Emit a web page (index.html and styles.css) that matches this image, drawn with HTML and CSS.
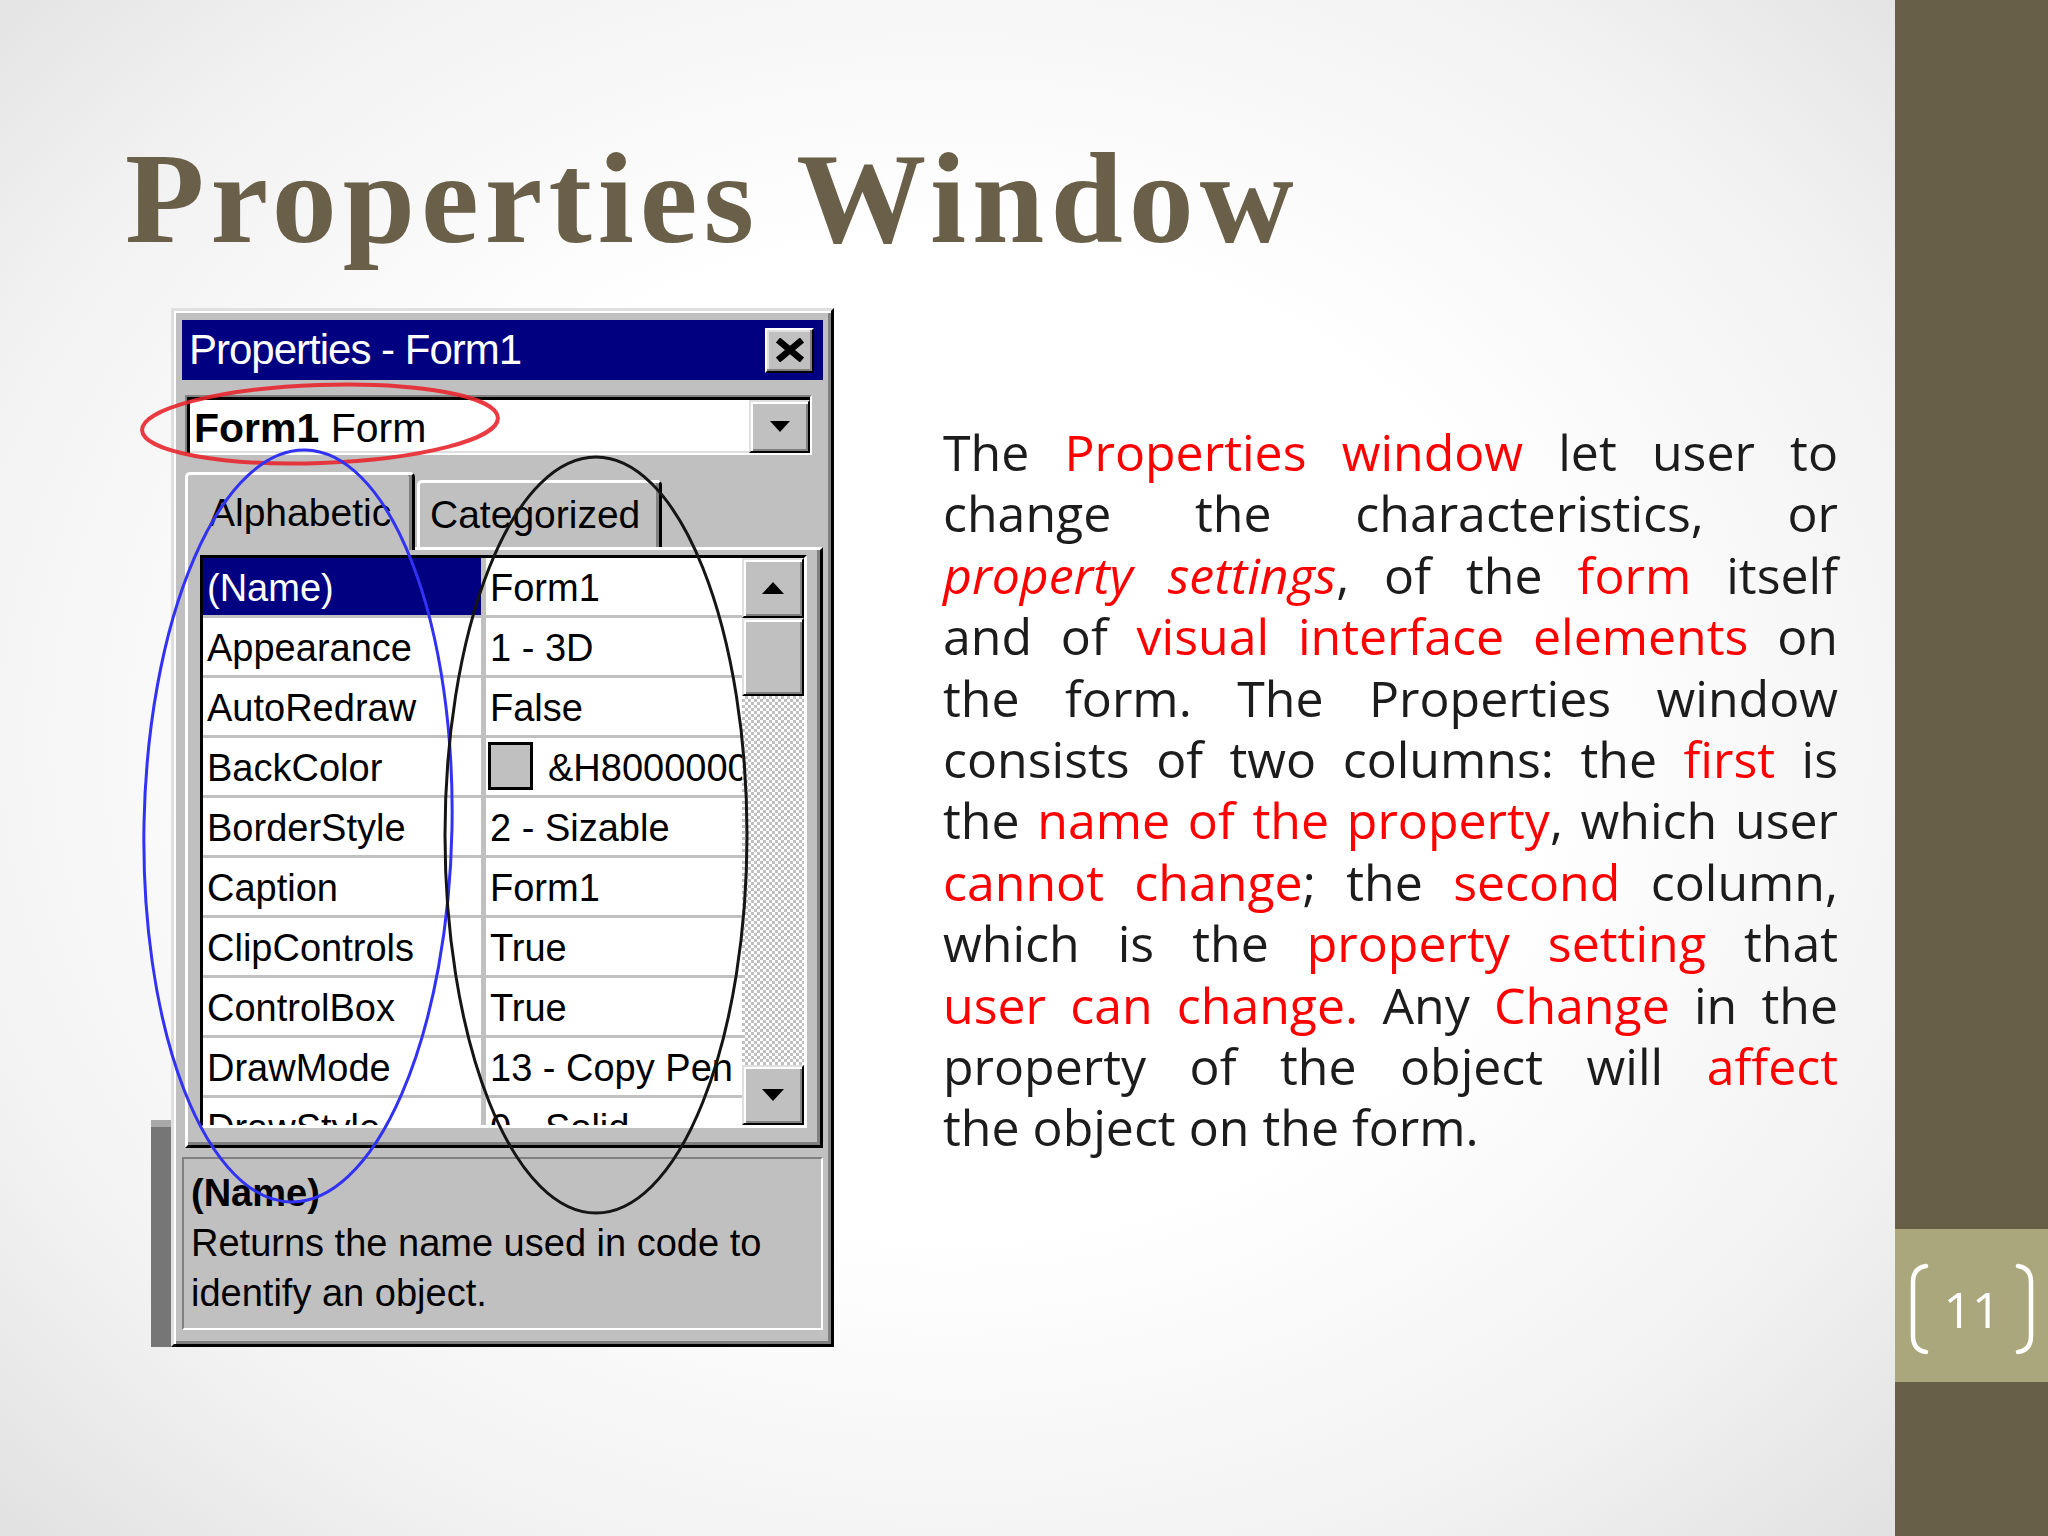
FILE: index.html
```html
<!DOCTYPE html>
<html>
<head>
<meta charset="utf-8">
<title>Properties Window</title>
<link rel="stylesheet" href="styles.css">
</head>
<body>
<div class="slide">
  <main class="main">
    <h1 class="title">Properties Window</h1>
    <div class="content">
      <div class="shot">
        <div class="strip"></div>
        <div class="win">
          <div class="titlebar">
            <span class="ttext">Properties - Form1</span>
            <span class="close"><svg width="30" height="24" viewBox="0 0 30 24"><path d="M3 2 L27 22 M27 2 L3 22" stroke="#000" stroke-width="6.5" fill="none"/></svg></span>
          </div>
          <div class="combo">
            <span class="ctext"><b>Form1</b> Form</span>
            <span class="dd"><svg width="20" height="11" viewBox="0 0 20 11"><polygon points="0,0 20,0 10,11" fill="#000"/></svg></span>
          </div>
          <div class="tabs">
            <span class="tab sel">Alphabetic</span>
            <span class="tab alt">Categorized</span>
          </div>
          <div class="panel">
            <div class="grid">
              <div class="rows">
                <div class="row sel"><span class="k">(Name)</span><span class="v">Form1</span></div>
                <div class="row"><span class="k">Appearance</span><span class="v">1 - 3D</span></div>
                <div class="row"><span class="k">AutoRedraw</span><span class="v">False</span></div>
                <div class="row"><span class="k">BackColor</span><span class="v vc"><span class="sw"></span><span>&amp;H8000000F&amp;</span></span></div>
                <div class="row"><span class="k">BorderStyle</span><span class="v">2 - Sizable</span></div>
                <div class="row"><span class="k">Caption</span><span class="v">Form1</span></div>
                <div class="row"><span class="k">ClipControls</span><span class="v">True</span></div>
                <div class="row"><span class="k">ControlBox</span><span class="v">True</span></div>
                <div class="row"><span class="k">DrawMode</span><span class="v">13 - Copy Pen</span></div>
                <div class="row"><span class="k">DrawStyle</span><span class="v">0 - Solid</span></div>
              </div>
              <div class="sb">
                <span class="btn up"><svg width="22" height="12" viewBox="0 0 22 12"><polygon points="11,0 22,12 0,12" fill="#000"/></svg></span>
                <span class="btn thumb"></span>
                <span class="track"></span>
                <span class="btn down"><svg width="22" height="12" viewBox="0 0 22 12"><polygon points="0,0 22,0 11,12" fill="#000"/></svg></span>
              </div>
            </div>
          </div>
          <div class="desc">
            <b>(Name)</b>
            <span class="dl">Returns the name used in code to</span>
            <span class="dl">identify an object.</span>
          </div>
        </div>
        <svg class="marks" width="683" height="1039" viewBox="0 0 683 1039">
          <ellipse cx="169" cy="116" rx="178" ry="39" transform="rotate(-2 169 116)" fill="none" stroke="#e8262e" stroke-width="4" opacity="0.9"/>
          <ellipse cx="147" cy="518" rx="154" ry="376" transform="rotate(1.1 147 518)" fill="none" stroke="#3232f5" stroke-width="3"/>
          <ellipse cx="445" cy="527" rx="151" ry="378" fill="none" stroke="#151515" stroke-width="3"/>
        </svg>
      </div>
      <p class="text">
        <span class="ln">The <span class="r">Properties window</span> let user to</span>
        <span class="ln">change the characteristics, or</span>
        <span class="ln"><span class="r i">property settings</span>, of the <span class="r">form</span> itself</span>
        <span class="ln">and of <span class="r">visual interface elements</span> on</span>
        <span class="ln">the form. The Properties window</span>
        <span class="ln">consists of two columns: the <span class="r">first</span> is</span>
        <span class="ln">the <span class="r">name of the property</span>, which user</span>
        <span class="ln"><span class="r">cannot change</span>; the <span class="r">second</span> column,</span>
        <span class="ln">which is the <span class="r">property setting</span> that</span>
        <span class="ln"><span class="r">user can change.</span> Any <span class="r">Change</span> in the</span>
        <span class="ln">property of the object will <span class="r">affect</span></span>
        <span class="ln last">the object on the form.</span>
      </p>
    </div>
  </main>
  <aside class="side">
    <div class="pg">
      <div class="br">
        <svg width="126" height="92" viewBox="0 0 126 92"><path d="M17 3 Q4 5 4 19 L4 73 Q4 87 17 89 M109 3 Q122 5 122 19 L122 73 Q122 87 109 89" fill="none" stroke="#fff" stroke-width="4.5" stroke-linecap="round"/></svg>
        <span class="num">11</span>
      </div>
    </div>
  </aside>
</div>
</body>
</html>
```

FILE: styles.css
```css
* { box-sizing: border-box; }
html, body { margin: 0; padding: 0; }
body { width: 2048px; height: 1536px; overflow: hidden; }

.slide { display: flex; width: 2048px; height: 1536px; }

.main {
  flex: 1;
  padding-top: 133px;
  background: radial-gradient(ellipse 78% 80% at 50% 48%, #ffffff 40%, #f2f2f2 70%, #dadada 100%);
}

.title {
  margin: 0;
  padding-left: 125px;
  font: bold 130px/130px "Liberation Serif", serif;
  letter-spacing: 6px;
  color: #6a604a;
}

.content { display: flex; align-items: flex-start; margin-top: 45px; }

.shot { position: relative; display: flex; margin-left: 151px; }

.strip {
  align-self: flex-end;
  width: 20px;
  height: 227px;
  background: #767676;
  border-top: 7px solid #a9a9a9;
}

.win {
  width: 663px;
  height: 1039px;
  background: #c0c0c0;
  border: 3px solid;
  border-color: #dfdfdf #000 #000 #dfdfdf;
  box-shadow: inset 2px 2px 0 #fff, inset -3px -3px 0 #808080;
  padding: 9px 8px 14px 8px;
  font-family: "Liberation Sans", Arial, sans-serif;
  color: #000;
}

.titlebar {
  height: 60px;
  background: #000080;
  display: flex;
  align-items: center;
  justify-content: space-between;
  padding: 0 9px 0 7px;
}
.ttext { color: #fff; font-size: 42px; line-height: 60px; letter-spacing: -1px; white-space: nowrap; }
.close {
  width: 49px;
  height: 45px;
  background: #c0c0c0;
  border: 2px solid;
  border-color: #fff #000 #000 #fff;
  box-shadow: inset -2px -2px 0 #808080, inset 2px 2px 0 #dfdfdf;
  display: flex;
  align-items: center;
  justify-content: center;
}

.combo {
  margin: 15px 11px 0 3px;
  height: 60px;
  background: #fff;
  border: 2px solid;
  border-color: #808080 #fff #fff #808080;
  box-shadow: inset 3px 3px 0 #000, inset -2px -2px 0 #dfdfdf;
  display: flex;
}
.ctext { flex: 1; padding: 7px 0 0 7px; font-size: 41px; line-height: 49px; white-space: nowrap; }
.dd, .btn {
  background: #c0c0c0;
  border: 2px solid;
  border-color: #dfdfdf #000 #000 #dfdfdf;
  box-shadow: inset 2px 2px 0 #fff, inset -2px -2px 0 #808080;
  display: flex;
  align-items: center;
  justify-content: center;
}
.dd { align-self: flex-end; width: 61px; height: 53px; }

.tabs { display: flex; align-items: flex-end; height: 75px; margin: 17px 0 0 3px; }
.tab {
  font-size: 39px;
  line-height: 45px;
  background: #c0c0c0;
  border: 3px solid;
  border-color: #fff #000 #c0c0c0 #fff;
  border-bottom-width: 0;
  border-radius: 5px 5px 0 0;
  box-shadow: inset -3px 0 0 #808080;
  white-space: nowrap;
}
.tab.sel { position: relative; z-index: 1; width: 230px; height: 78px; margin-bottom: -3px; padding: 15px 0 0 21px; }
.tab.alt { width: 245px; height: 67px; margin-left: 2px; padding: 9px 0 0 10px; }

.panel {
  height: 601px;
  margin-left: 3px;
  border: 3px solid;
  border-color: #fff #000 #000 #fff;
  box-shadow: inset -3px -3px 0 #808080;
  padding: 5px 13px 17px 12px;
}
.grid {
  height: 573px;
  border: 3px solid;
  border-color: #000 #fff #fff #000;
  display: flex;
  background: #c0c0c0;
}
.rows { flex: 1; display: flex; flex-direction: column; gap: 3px; overflow: hidden; background: #c0c0c0; }
.row { flex: none; display: grid; grid-template-columns: 278px 1fr; column-gap: 5px; height: 57px; }
.k, .v {
  background: #fff;
  font-size: 38px;
  line-height: 53px;
  padding-top: 4px;
  white-space: nowrap;
  overflow: hidden;
}
.k { padding-left: 4px; }
.v { padding-left: 4px; }
.row.sel .k { background: #000080; color: #fff; }
.vc { display: flex; align-items: flex-start; gap: 15px; padding-left: 2px; }
.sw { flex: none; width: 45px; height: 48px; border: 3px solid #000; background: #c0c0c0; }

.sb { width: 62px; display: flex; flex-direction: column; }
.btn.up, .btn.down { height: 60px; }
.btn.thumb { height: 78px; }
.track { flex: 1; background: repeating-conic-gradient(#c0c0c0 0 25%, #ffffff 0 50%) 0 0 / 6px 6px; }

.desc {
  margin-top: 9px;
  height: 173px;
  border: 2px solid;
  border-color: #808080 #fff #fff #808080;
  padding: 9px 7px 0 7px;
  font-size: 38px;
  line-height: 50px;
}
.desc b, .dl { display: block; white-space: nowrap; }

.marks { position: absolute; left: 0; top: 0; z-index: 2; overflow: visible; pointer-events: none; }

.text {
  margin: 114px 0 0 109px;
  width: 895px;
  font-family: "Open Sans", sans-serif;
  font-size: 50px;
  line-height: 61.4px;
  color: #1c1c1c;
}
.ln { display: block; text-align: justify; text-align-last: justify; }
.ln.last { text-align-last: left; }
.r { color: #ff0000; }
.i { font-style: italic; }

.side { width: 153px; background: #685f48; padding-top: 1229px; }
.pg { height: 153px; background: #aba77c; padding: 34px 0 0 14px; }
.br { position: relative; width: 126px; height: 92px; display: flex; align-items: center; justify-content: center; }
.br svg { position: absolute; left: 0; top: 0; }
.num { color: #fff; font: 50px/1 "Open Sans", sans-serif; }
```
